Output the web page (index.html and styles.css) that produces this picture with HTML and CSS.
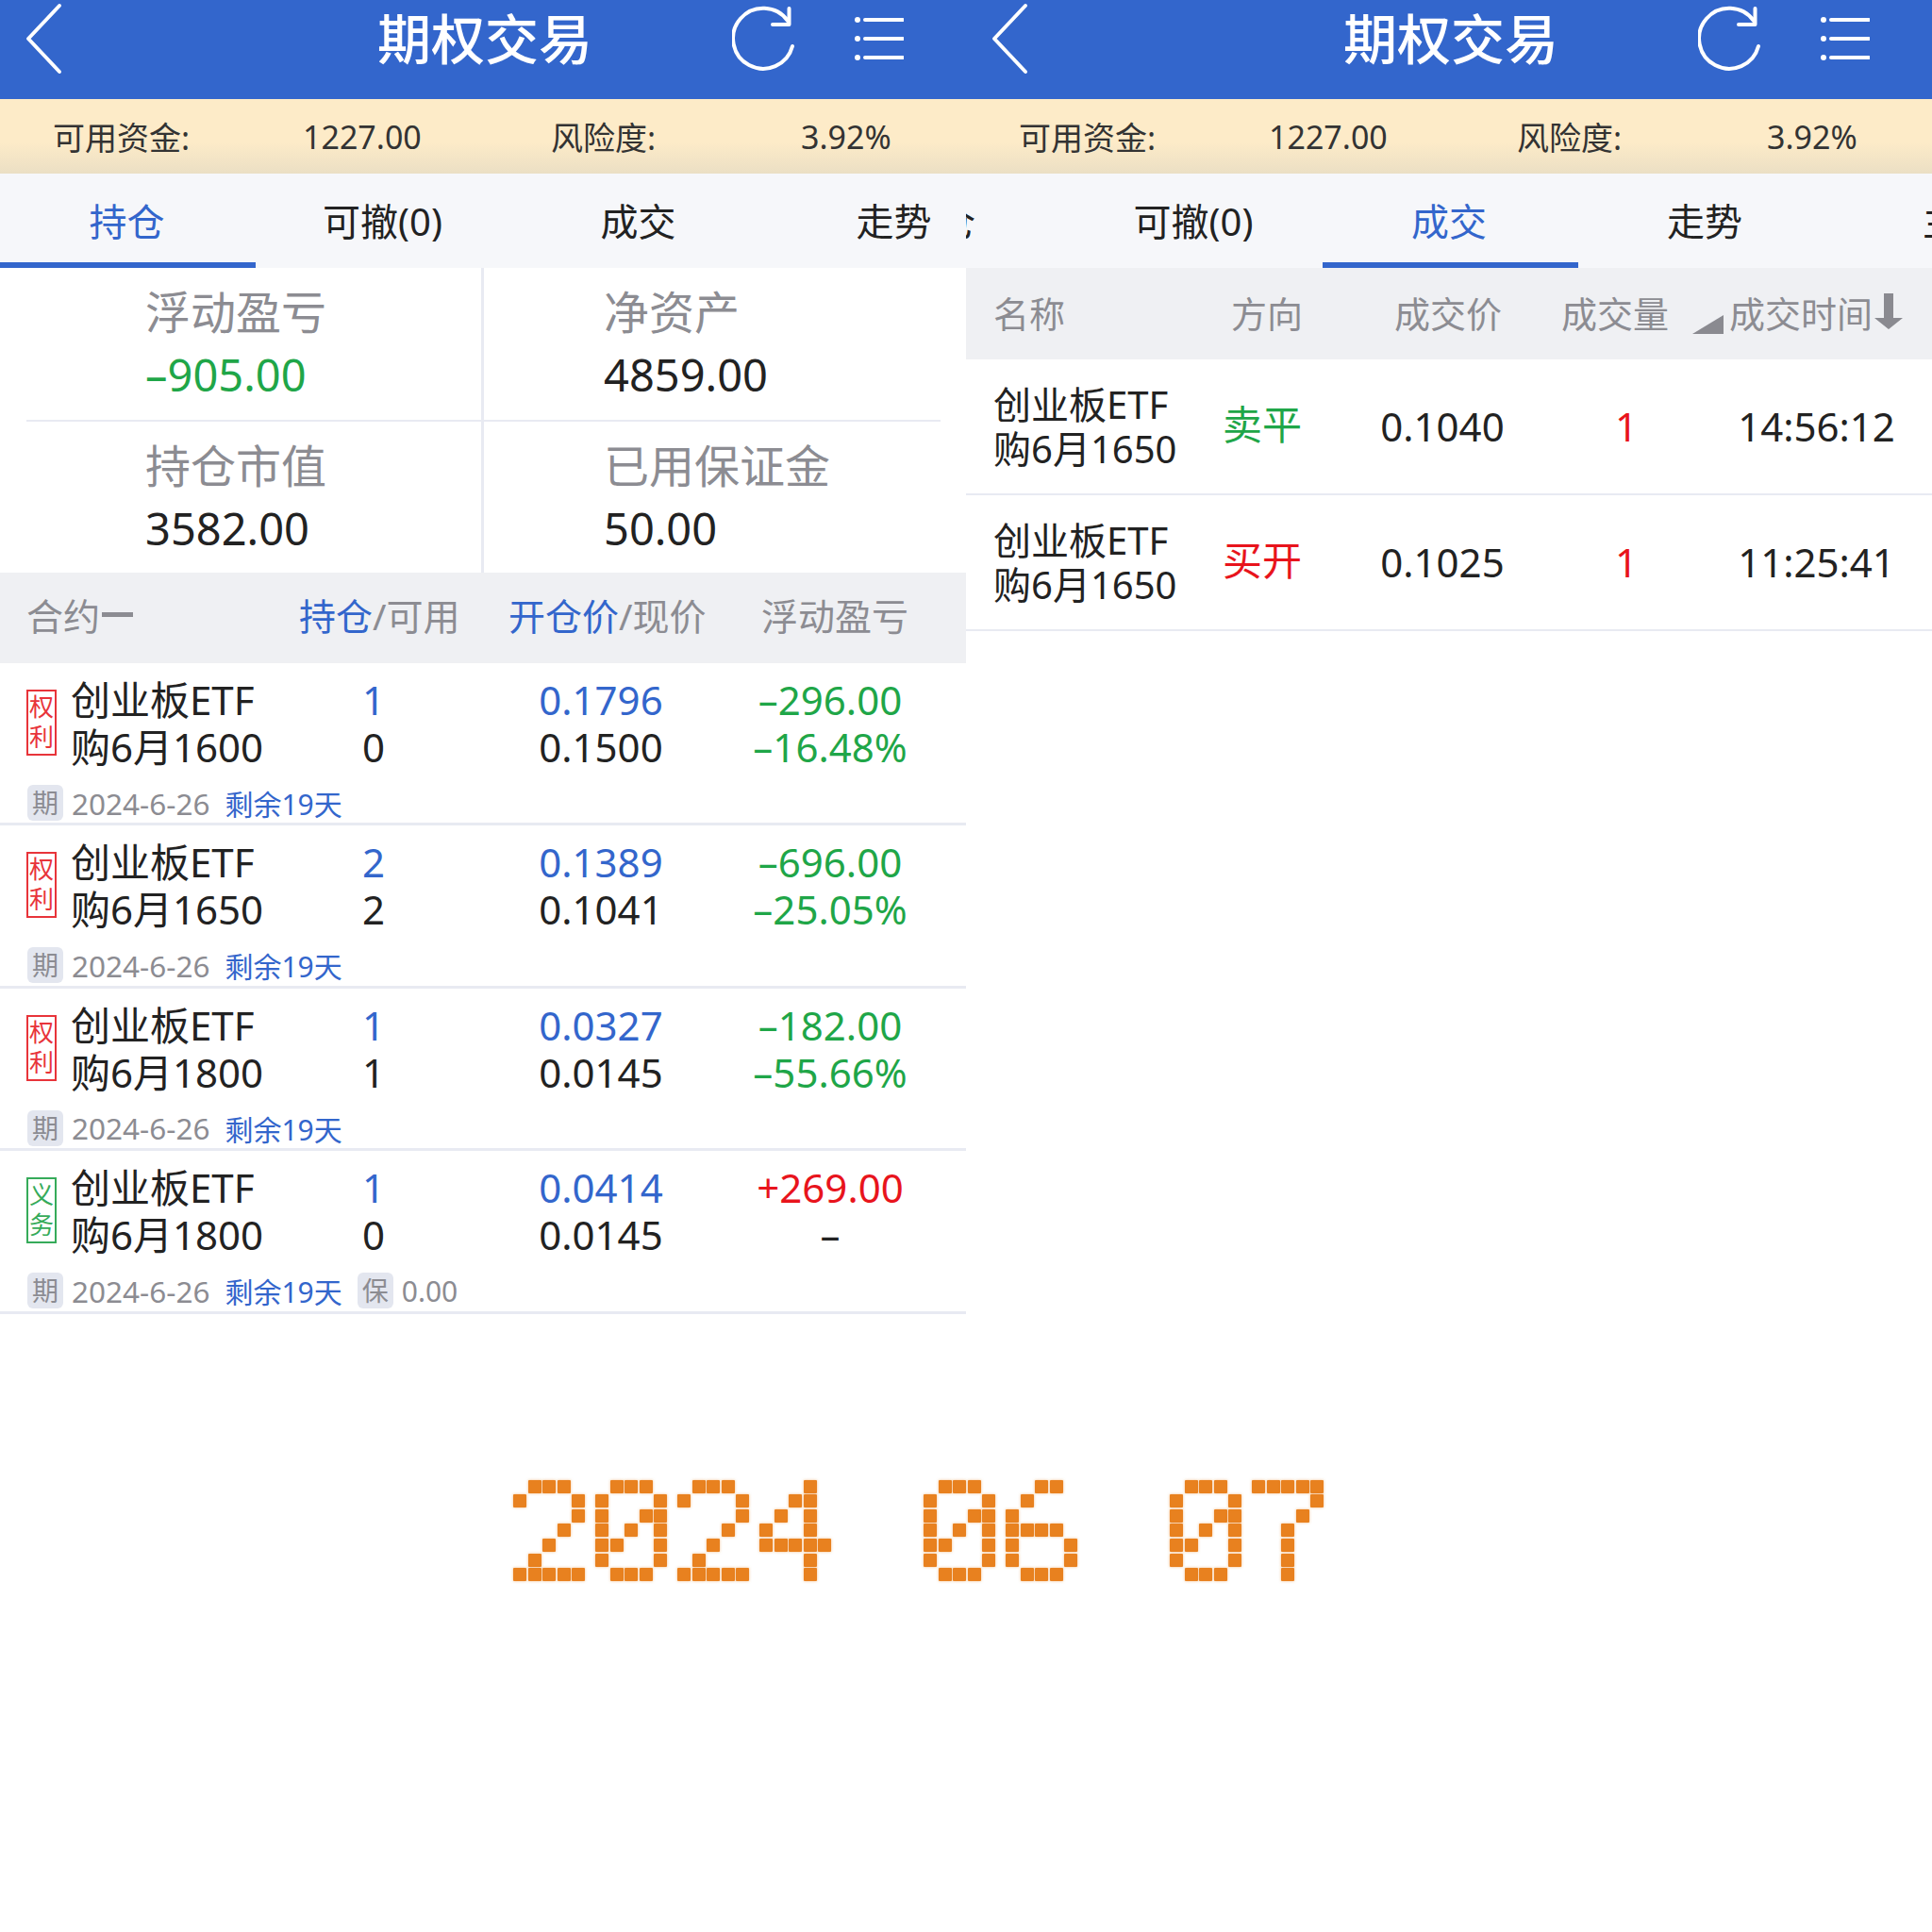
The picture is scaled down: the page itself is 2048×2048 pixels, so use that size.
FILE: index.html
```html
<!DOCTYPE html>
<html lang="zh-CN">

<head>
  <meta charset="utf-8" />
  <meta name="viewport" content="width=device-width, initial-scale=1" />
  <title>期权交易</title>
  <link rel="stylesheet" href="styles.css">
</head>

<body>
  <div class="panels">
    <!-- positions -->
    <section class="panel">
      <header class="topbar">
        <svg class="icon-back" width="40" height="76" viewBox="0 0 40 76"><path d="M36 3 L3 38 L36 73" /></svg>
        <h1 class="topbar-title">期权交易</h1>
        <div class="topbar-icons">
          <svg class="icon-refresh" width="70" height="74" viewBox="0 0 70 74"><path d="M64 45 A32 32 0 1 1 59 18" /><path d="M60.5 5 V22 H43" /></svg>
          <svg class="icon-menu" width="52" height="46" viewBox="0 0 52 46"><circle cx="3" cy="3" r="3" /><circle cx="3" cy="23" r="3" /><circle cx="3" cy="43" r="3" /><path d="M11 3 H51 M11 23 H51 M11 43 H51" /></svg>
        </div>
      </header>
      <div class="fundbar">
        <span>可用资金:</span><span class="fund-value">1227.00</span><span>风险度:</span><span>3.92%</span>
      </div>
      <nav class="tabs">
        <a class="tab active">持仓</a><a class="tab">可撤(0)</a><a class="tab">成交</a><a class="tab">走势</a>
      </nav>
      <div class="summary">
        <div class="summary-cell first-row left-col"><div class="summary-label">浮动盈亏</div><div class="summary-value green">–905.00</div></div>
        <div class="summary-cell first-row"><div class="summary-label">净资产</div><div class="summary-value">4859.00</div></div>
        <div class="summary-cell left-col"><div class="summary-label">持仓市值</div><div class="summary-value">3582.00</div></div>
        <div class="summary-cell"><div class="summary-label">已用保证金</div><div class="summary-value">50.00</div></div>
      </div>
      <div class="pos-head">
        <span class="pos-head-name">合约<b class="sort-dash"></b></span>
        <span class="pos-head-col"><em>持仓</em>/可用</span>
        <span class="pos-head-col"><em>开仓价</em>/现价</span>
        <span class="pos-head-col">浮动盈亏</span>
      </div>

      <div class="pos-row">
        <div class="pos-main">
          <div class="kind kind-buy">权<br>利</div>
          <div class="pos-name">创业板ETF<br>购6月1600</div>
          <div class="pos-num"><span class="blue">1</span><br>0</div>
          <div class="pos-num pos-price"><span class="blue">0.1796</span><br>0.1500</div>
          <div class="pos-num pos-pnl green">–296.00<br>–16.48%</div>
        </div>
        <div class="pos-meta"><span class="meta-badge">期</span><span class="meta-date">2024-6-26</span><span class="meta-left">剩余19天</span></div>
      </div>
      <div class="pos-row">
        <div class="pos-main">
          <div class="kind kind-buy">权<br>利</div>
          <div class="pos-name">创业板ETF<br>购6月1650</div>
          <div class="pos-num"><span class="blue">2</span><br>2</div>
          <div class="pos-num pos-price"><span class="blue">0.1389</span><br>0.1041</div>
          <div class="pos-num pos-pnl green">–696.00<br>–25.05%</div>
        </div>
        <div class="pos-meta"><span class="meta-badge">期</span><span class="meta-date">2024-6-26</span><span class="meta-left">剩余19天</span></div>
      </div>
      <div class="pos-row">
        <div class="pos-main">
          <div class="kind kind-buy">权<br>利</div>
          <div class="pos-name">创业板ETF<br>购6月1800</div>
          <div class="pos-num"><span class="blue">1</span><br>1</div>
          <div class="pos-num pos-price"><span class="blue">0.0327</span><br>0.0145</div>
          <div class="pos-num pos-pnl green">–182.00<br>–55.66%</div>
        </div>
        <div class="pos-meta"><span class="meta-badge">期</span><span class="meta-date">2024-6-26</span><span class="meta-left">剩余19天</span></div>
      </div>
      <div class="pos-row">
        <div class="pos-main">
          <div class="kind kind-sell">义<br>务</div>
          <div class="pos-name">创业板ETF<br>购6月1800</div>
          <div class="pos-num"><span class="blue">1</span><br>0</div>
          <div class="pos-num pos-price"><span class="blue">0.0414</span><br>0.0145</div>
          <div class="pos-num pos-pnl"><span class="red">+269.00</span><br>–</div>
        </div>
        <div class="pos-meta"><span class="meta-badge">期</span><span class="meta-date">2024-6-26</span><span class="meta-left">剩余19天</span><span class="meta-badge meta-badge-bail">保</span><span class="meta-bail">0.00</span></div>
      </div>
    </section>

    <!-- trades -->
    <section class="panel">
      <header class="topbar">
        <svg class="icon-back" width="40" height="76" viewBox="0 0 40 76"><path d="M36 3 L3 38 L36 73" /></svg>
        <h1 class="topbar-title">期权交易</h1>
        <div class="topbar-icons">
          <svg class="icon-refresh" width="70" height="74" viewBox="0 0 70 74"><path d="M64 45 A32 32 0 1 1 59 18" /><path d="M60.5 5 V22 H43" /></svg>
          <svg class="icon-menu" width="52" height="46" viewBox="0 0 52 46"><circle cx="3" cy="3" r="3" /><circle cx="3" cy="23" r="3" /><circle cx="3" cy="43" r="3" /><path d="M11 3 H51 M11 23 H51 M11 43 H51" /></svg>
        </div>
      </header>
      <div class="fundbar">
        <span>可用资金:</span><span class="fund-value">1227.00</span><span>风险度:</span><span>3.92%</span>
      </div>
      <nav class="tabs tabs-scrolled">
        <a class="tab">持仓</a><a class="tab">可撤(0)</a><a class="tab active">成交</a><a class="tab">走势</a><a class="tab">主力</a>
      </nav>
      <div class="trade-head">
        <span class="trade-head-name">名称</span>
        <span>方向</span>
        <span>成交价</span>
        <span>成交量</span>
        <span class="trade-head-time">
          <svg class="sort-corner" width="33" height="20" viewBox="0 0 33 20"><path d="M0 20 L33 0 V20 Z" /></svg>成交时间<svg class="sort-arrow" width="30" height="38" viewBox="0 0 30 38"><path d="M10 0 H20 V26 H30 L15 38 L0 26 H10 Z" /></svg>
        </span>
      </div>
      <div class="trade-row">
        <div class="trade-name">创业板ETF<br>购6月1650</div>
        <div class="trade-dir green">卖平</div>
        <div class="trade-num">0.1040</div>
        <div class="trade-num red">1</div>
        <div class="trade-num">14:56:12</div>
      </div>
      <div class="trade-row">
        <div class="trade-name">创业板ETF<br>购6月1650</div>
        <div class="trade-dir red">买开</div>
        <div class="trade-num">0.1025</div>
        <div class="trade-num red">1</div>
        <div class="trade-num">11:25:41</div>
      </div>
    </section>
  </div>

  <div class="matrix" id="matrix" role="img" aria-label="2024 06 07"></div>
  <script src="matrix.js"></script>
</body>

</html>
```

FILE: styles.css
```css
html,
body {
  margin: 0;
  background: #fff;
  color: #222;
  font-family: "Noto Sans", "Noto Sans CJK SC", sans-serif;
}

body {
  width: 2048px;
  height: 2048px;
  overflow: hidden;
}

.panels {
  display: flex;
}

.panel {
  width: 1024px;
  overflow: hidden;
}

.green { color: #1fa648; }
.red { color: #e8141c; }
.blue { color: #3366cc; }

/* top bar */
.topbar {
  display: grid;
  grid-template-columns: 400px 224px 1fr;
  align-items: center;
  height: 105px;
  padding-bottom: 23px;
  box-sizing: border-box;
  background: #3366cc;
  color: #fff;
}

.topbar-title {
  margin: 0;
  font-size: 57px;
  font-weight: 500;
  line-height: 82px;
  text-align: center;
  white-space: nowrap;
}

.topbar svg {
  fill: none;
  stroke: #fff;
  stroke-width: 4;
  stroke-linecap: round;
  stroke-linejoin: round;
}

.icon-back {
  margin-left: 27px;
}

.topbar-icons {
  display: flex;
  align-items: center;
  margin-left: 152px;
}

.icon-refresh {
  margin-top: -1px;
}

.icon-menu {
  margin-left: 60px;
}

.icon-menu circle {
  fill: #fff;
  stroke: none;
}

/* funds */
.fundbar {
  display: grid;
  grid-template-columns: 265px 263px 265px 1fr;
  align-items: center;
  height: 79px;
  padding-left: 56px;
  box-sizing: border-box;
  background: linear-gradient(180deg, #fdebc8 0, #fdebc8 58%, #ebdfc4 100%);
  font-size: 34px;
  color: #333;
}

/* tabs */
.tabs {
  display: flex;
  height: 100px;
  background: #f6f7fa;
}

.tabs-scrolled {
  margin-left: -164.5px;
  width: 1400px;
}

.tab {
  flex: 0 0 271px;
  box-sizing: border-box;
  padding: 8px 2px 0 0;
  border-bottom: 6px solid transparent;
  font-size: 40px;
  line-height: 86px;
  text-align: center;
  white-space: nowrap;
}

.tab.active {
  color: #3366cc;
  border-bottom-color: #3366cc;
}

/* summary */
.summary {
  display: grid;
  grid-template-columns: 485px 484px;
  grid-template-rows: 163px 160px;
  margin: 0 28px;
}

.summary-cell {
  padding: 14px 0 0 127px;
  box-sizing: border-box;
}

.summary-cell.left-col {
  padding-left: 126px;
  border-right: 3px solid #e8eaf2;
}

.summary-cell.first-row {
  border-bottom: 2px solid #e8eaf2;
}

.summary-label {
  font-size: 48px;
  line-height: 66px;
  color: #8c8c92;
}

.summary-value {
  font-size: 47px;
  line-height: 66px;
}

/* positions table */
.pos-head {
  display: grid;
  grid-template-columns: 340px 130px 310px 1fr;
  align-items: center;
  height: 96px;
  padding: 0 0 9px 28px;
  box-sizing: border-box;
  background: #eff0f3;
  font-size: 39px;
  color: #8c8c92;
}

.pos-head em {
  font-style: normal;
  color: #3366cc;
}

.pos-head-name {
  display: flex;
  align-items: center;
  margin-right: 50px;
}

.pos-head-col {
  white-space: nowrap;
}

.pos-head-col:nth-child(2) { margin-left: -51px; }
.pos-head-col:nth-child(3) { margin-left: 41px; }
.pos-head-col:nth-child(4) { margin-left: -1px; }

.sort-dash {
  width: 33px;
  height: 5px;
  margin: 2px 0 0 2px;
  background: #8c8c92;
}

.pos-row {
  padding: 14px 0 2.4px 28px;
  border-bottom: 3px solid #e8eaf2;
}

.pos-main {
  display: grid;
  grid-template-columns: 32px 280px 112px 300px 248px;
  font-size: 42px;
  line-height: 50px;
}

.kind {
  align-self: start;
  width: 32px;
  height: 70px;
  margin-top: 14px;
  border: 2px solid;
  box-sizing: border-box;
  font-size: 26px;
  line-height: 32px;
  text-align: center;
}

.kind-buy { color: #e8343a; }
.kind-sell { color: #36ab5a; }

.pos-name {
  padding-left: 15px;
  white-space: nowrap;
}

.pos-num {
  text-align: center;
}

.pos-price {
  padding-left: 70px;
}

.pos-pnl {
  padding-left: 8px;
  white-space: nowrap;
}

.pos-meta {
  display: flex;
  align-items: center;
  height: 38px;
  margin-top: 15px;
  color: #8c8c92;
}

.meta-badge {
  width: 38px;
  height: 38px;
  margin-left: 1px;
  border-radius: 6px;
  background: #e3e6ef;
  font-size: 28px;
  line-height: 38px;
  text-align: center;
}

.meta-badge-bail {
  margin-left: 16px;
}

.meta-date {
  margin-left: 9px;
  font-size: 31.5px;
}

.meta-left {
  margin-left: 16px;
  font-size: 30px;
  color: #3366cc;
}

.meta-bail {
  margin-left: 9px;
  font-size: 30px;
}

/* trades table */
.trade-head {
  display: grid;
  grid-template-columns: 210px 160px 224px 130px 1fr;
  align-items: center;
  height: 97px;
  padding: 0 0 5px 29px;
  box-sizing: border-box;
  background: #eff0f3;
  font-size: 38px;
  color: #8c8c92;
  text-align: center;
}

.trade-head-name {
  text-align: left;
}

.trade-head-time {
  display: flex;
  align-items: center;
  padding-left: 17px;
  white-space: nowrap;
}

.sort-corner {
  margin: 27px 6px 0 0;
  fill: #8a8a90;
}

.sort-arrow {
  margin: 0 0 0 2px;
  fill: #8a8a90;
}

.trade-row {
  display: grid;
  grid-template-columns: 210px 150px 232px 158px 1fr;
  align-items: center;
  height: 144px;
  padding-left: 29px;
  box-sizing: border-box;
  border-bottom: 2px solid #e8eaf2;
}

.trade-name {
  font-size: 40px;
  line-height: 47px;
  white-space: nowrap;
}

.trade-dir {
  margin-top: -5px;
  font-size: 42px;
  line-height: 56px;
  text-align: center;
}

.trade-num {
  margin-top: -2px;
  font-size: 42px;
  text-align: center;
}

/* date stamp */
.matrix {
  display: flex;
  gap: 11px;
  margin-left: 544px;
  margin-top: 176px;
}

.matrix-digit {
  display: grid;
  grid-template-columns: repeat(5, 14px);
  grid-auto-rows: 14px;
  gap: 1.65px 1.5px;
  width: 76px;
}

.matrix-cell {
  border-radius: 1px;
}

.matrix-cell.on {
  background: #e8811f;
  box-shadow: 0 0 3px rgba(232, 129, 31, 0.55);
}
```

FILE: matrix.js
```js
var digits = {
  '0': ['.###.', '#...#', '#..##', '#.#.#', '##..#', '#...#', '.###.'],
  '2': ['.###.', '#...#', '....#', '...#.', '..#..', '.#...', '#####'],
  '4': ['...#.', '..##.', '.#.#.', '#..#.', '#####', '...#.', '...#.'],
  '6': ['..##.', '.#...', '#....', '####.', '#...#', '#...#', '.###.'],
  '7': ['#####', '....#', '...#.', '..#..', '..#..', '..#..', '..#..']
};

var matrixEl = document.getElementById('matrix');

'2024 06 07'.split('').forEach(function (ch) {
  var digitEl = document.createElement('div');
  digitEl.className = 'matrix-digit';
  if (digits[ch]) {
    digits[ch].join('').split('').forEach(function (c) {
      var cellEl = document.createElement('div');
      cellEl.className = 'matrix-cell ' + (c === '#' ? 'on' : 'off');
      digitEl.appendChild(cellEl);
    });
  }
  matrixEl.appendChild(digitEl);
});
```
